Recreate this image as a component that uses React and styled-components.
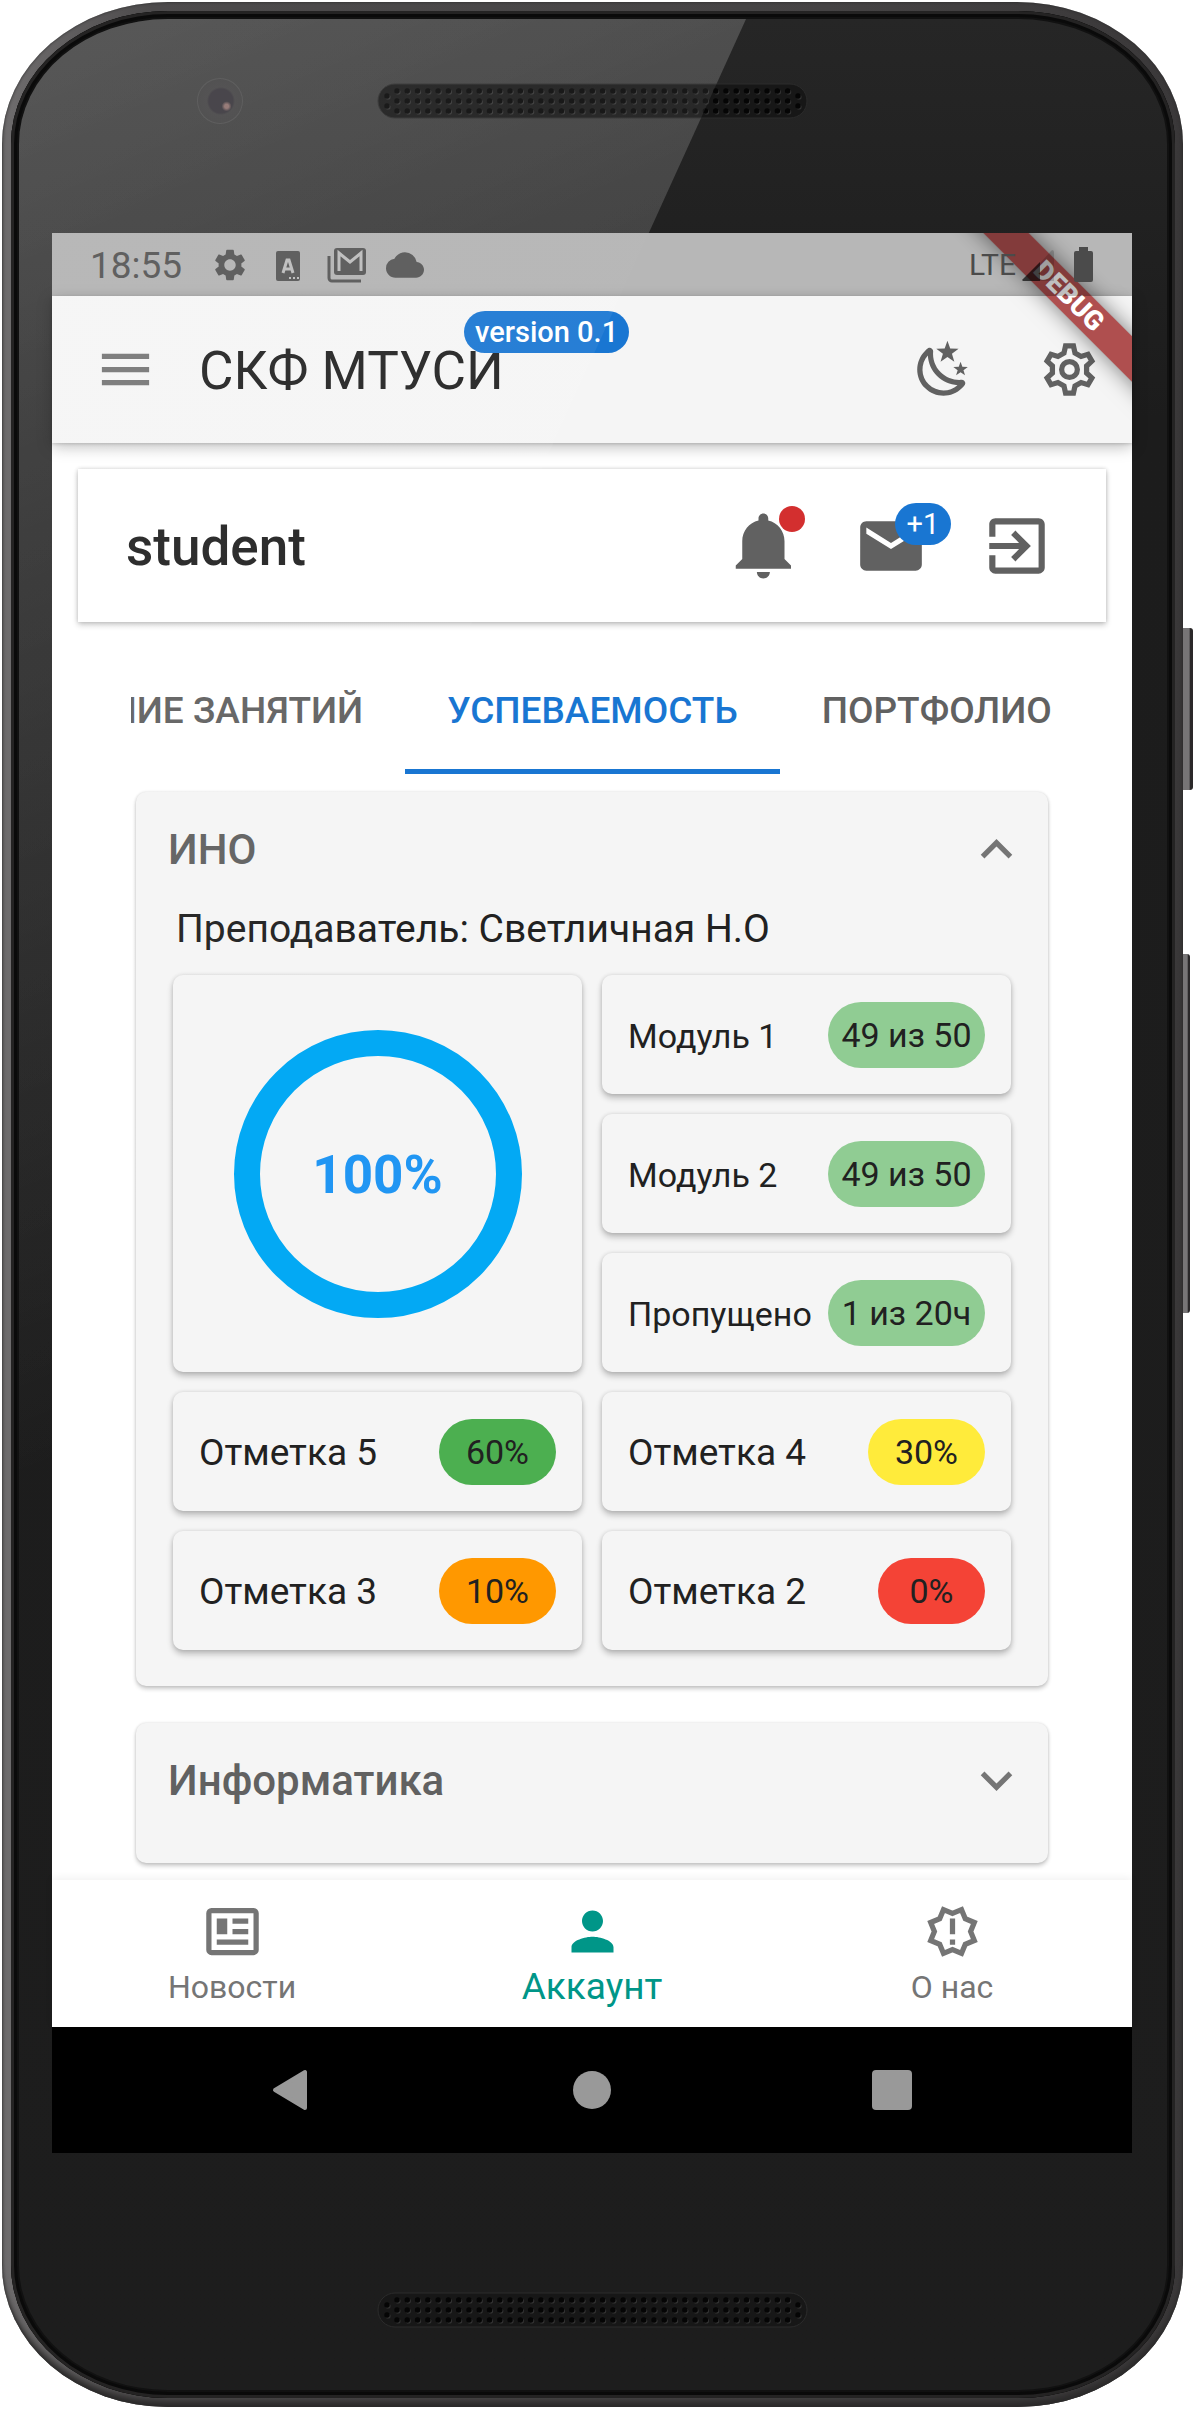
import React, { useState } from "react";
import styled, { createGlobalStyle, css } from "styled-components";
import { MdCloud, MdSettings } from "react-icons/md";

const color = {
  ink: "#212121",
  grey: "#616161",
  muted: "#757575",
  surface: "#f5f5f5",
  blue: "#1976d2",
  teal: "#009688",
};

const GlobalStyle = createGlobalStyle`
  *, *::before, *::after { box-sizing: border-box; }
  body {
    margin: 0;
    background: #fff;
    color: ${color.ink};
    font-family: Roboto, "Liberation Sans", sans-serif;
  }
  h1, h2, p, dl, dt, dd { margin: 0; font-weight: inherit; font-size: inherit; }
  button {
    border: 0;
    padding: 0;
    background: none;
    color: inherit;
    font: inherit;
    cursor: pointer;
  }
  a { color: inherit; text-decoration: none; }
  svg { display: block; }
`;

/* ---------- device ---------- */

const Page = styled.div`
  padding: 2px 11px 2px 2px;
`;

const Phone = styled.div`
  position: relative;
  padding: 9px 8px 9px 9px;
  border-radius: 166px / 142px;
  background: linear-gradient(90deg, #6f6d6e 0, #4d4b4c 150px, #454344 70%, #3a3839 100%);
  box-shadow: inset 0 -8px 6px -2px #2b2a2a, inset 0 0 3px #2a2a2a;
`;

const SideButton = styled.span`
  position: absolute;
  left: 100%;
  top: ${(p) => p.$top}px;
  width: ${(p) => p.$width}px;
  height: ${(p) => p.$height}px;
  border-radius: 0 3px 3px 0;
  background: linear-gradient(90deg, #777576 0 60%, #2a2829 75%);
`;

const Bezel = styled.div`
  padding: 8px;
  border-radius: 157px / 133px;
  background: #111;
  box-shadow: inset 0 0 0 3px #242323, inset 0 0 0 6px #0a0a0a;
`;

const Glass = styled.div`
  position: relative;
  overflow: hidden;
  padding: 0 35px 0 33px;
  border-radius: 149px / 125px;
  background: linear-gradient(180deg, #262626 0, #1c1c1c 400px, #1d1d1d 100%);
`;

const Glare = styled.span`
  position: absolute;
  inset: 0;
  pointer-events: none;
  clip-path: polygon(0 0, 727px 0, 0 1600px);
  background: linear-gradient(
    158deg,
    rgba(255, 255, 255, ${(p) => p.$strength}) 0,
    rgba(255, 255, 255, ${(p) => p.$strength * 0.4}) 30%,
    rgba(255, 255, 255, 0) 52%
  );
`;

const TopBezel = styled.div`
  position: relative;
  display: grid;
  grid-template-columns: 1fr auto 1fr;
  align-items: center;
  height: 214px;
  padding-bottom: 50px;
`;

const BottomBezel = styled.div`
  display: grid;
  place-items: center;
  height: 237px;
  padding-top: 77px;
`;

const Camera = styled.span`
  justify-self: end;
  width: 46px;
  height: 46px;
  margin-right: 134px;
  border-radius: 50%;
  border: 1px solid rgba(255, 255, 255, 0.08);
  background: radial-gradient(circle at 65% 62%, #8d6f6c 0 2px, transparent 5px),
    radial-gradient(circle at 52% 50%, #37343a 0 12px, #434243 14px, #3f3f3f 100%);
`;

const Screen = styled.div`
  position: relative;
  background: #fff;
`;

/* ---------- status bar ---------- */

const StatusBar = styled.div`
  position: relative;
  z-index: 3;
  display: flex;
  align-items: center;
  gap: 19px;
  height: 63px;
  padding: 0 39px 0 38px;
  background: rgba(0, 0, 0, 0.25);
  color: #606060;
`;

const StatusBacking = styled.div`
  background: ${color.surface};
`;

const Clock = styled.time`
  margin-right: 10px;
  padding-top: 3px;
  font-size: 37px;
  line-height: 48px;
`;

const Network = styled.div`
  display: flex;
  align-items: center;
  gap: 20px;
  margin-left: auto;
  color: #4b4b4b;
`;

const Carrier = styled.span`
  display: flex;
  align-items: center;
  gap: 6px;
  font-size: 30px;
  line-height: 40px;
`;

const BannerClip = styled.div`
  position: absolute;
  inset: 0;
  z-index: 2;
  overflow: hidden;
  pointer-events: none;
`;

const Banner = styled.div`
  position: absolute;
  top: 47px;
  right: -87px;
  width: 300px;
  height: 32px;
  transform: rotate(45deg);
  background: rgba(150, 20, 20, 0.74);
  box-shadow: 0 0 22px rgba(0, 0, 0, 0.5);
  color: #fff;
  font-size: 27px;
  font-weight: 900;
  line-height: 32px;
  text-align: center;
`;

/* ---------- app bar ---------- */

const AppBar = styled.header`
  position: relative;
  display: flex;
  align-items: center;
  height: 147px;
  background: ${color.surface};
  box-shadow: 0 4px 14px rgba(0, 0, 0, 0.26), 0 1px 3px rgba(0, 0, 0, 0.16);
`;

const MenuButton = styled.button`
  display: grid;
  place-items: center;
  width: 147px;
  height: 126px;
  color: ${color.muted};
`;

const Title = styled.h1`
  position: relative;
  margin-right: auto;
  padding-top: 3px;
  font-size: 53px;
  line-height: 60px;
`;

const VersionBadge = styled.span`
  position: absolute;
  left: 265px;
  bottom: 48px;
  padding: 0 11px;
  border-radius: 21px;
  background: ${color.blue};
  color: #fff;
  font-size: 29px;
  font-weight: 500;
  line-height: 42px;
  white-space: nowrap;
`;

const IconButton = styled.button`
  display: grid;
  place-items: center;
  width: 126px;
  height: 126px;
  color: ${color.grey};
`;

/* ---------- student card ---------- */

const Content = styled.main`
  padding: 26px 26px 17px;
`;

const StudentCard = styled.section`
  display: flex;
  align-items: center;
  height: 153px;
  padding: 0 26px 0 48px;
  background: #fff;
  box-shadow: 0 3px 6px rgba(0, 0, 0, 0.2), 0 0 4px rgba(0, 0, 0, 0.18);
`;

const StudentName = styled.h2`
  margin-right: auto;
  padding-top: 3px;
  font-size: 53px;
  font-weight: 500;
  line-height: 60px;
`;

const Badged = styled.span`
  position: relative;
  display: block;
`;

const AlertDot = styled.span`
  position: absolute;
  top: -1px;
  right: -1px;
  width: 26px;
  height: 26px;
  border-radius: 50%;
  background: #d32f2f;
`;

const CountBadge = styled.span`
  position: absolute;
  top: -6px;
  left: 41px;
  width: 56px;
  border-radius: 22px;
  background: ${color.blue};
  color: #fff;
  font-size: 29px;
  line-height: 42px;
  text-align: center;
`;

/* ---------- tabs ---------- */

const Tabs = styled.div`
  display: grid;
  grid-template-columns: minmax(0, 1fr) auto minmax(0, 1fr);
  overflow: hidden;
  margin: 31px 52px 0 53px;
`;

const TabSlot = styled.div`
  display: flex;
  justify-content: ${(p) => p.$align};
`;

const Tab = styled.button`
  flex: none;
  height: 121px;
  padding: 0 42px 2px;
  border-bottom: 5px solid transparent;
  color: ${color.grey};
  font-size: 37px;
  font-weight: 500;
  white-space: nowrap;
  ${(p) =>
    p.$active &&
    css`
      border-color: ${color.blue};
      color: ${color.blue};
    `}
`;

/* ---------- subjects ---------- */

const Subjects = styled.div`
  display: grid;
  gap: 37px;
  padding: 18px 58px 0;
`;

const SubjectCard = styled.article`
  border-radius: 10px;
  background: ${color.surface};
  box-shadow: 0 3px 4px rgba(0, 0, 0, 0.2), 0 0 3px rgba(0, 0, 0, 0.14);
`;

const SubjectHeader = styled.button`
  display: flex;
  align-items: center;
  justify-content: space-between;
  width: 100%;
  height: 114px;
  padding: 0 20px 0 32px;
  color: ${color.grey};
  font-size: 42px;
  font-weight: 500;
`;

const SubjectFooter = styled.div`
  height: 26px;
`;

const SubjectBody = styled.div`
  padding: 0 37px 36px;
`;

const Teacher = styled.p`
  margin: 0 0 23px 3px;
  font-size: 39px;
  line-height: 46px;
`;

const Scores = styled.dl`
  display: grid;
  grid-template-columns: 1fr 1fr;
  gap: 20px;
`;

const tile = css`
  border-radius: 10px;
  background: ${color.surface};
  box-shadow: 0 4px 6px rgba(0, 0, 0, 0.24), 0 0 4px rgba(0, 0, 0, 0.12);
`;

const RingTile = styled.div`
  ${tile}
  grid-row: span 3;
  display: grid;
  place-items: center;
  > * {
    grid-area: 1 / 1;
  }
`;

const RingValue = styled.strong`
  padding-top: 3px;
  color: #2196f3;
  font-size: 53px;
  font-weight: 700;
  line-height: 60px;
`;

const ScoreTile = styled.div`
  ${tile}
  display: flex;
  align-items: center;
  justify-content: space-between;
  height: 119px;
  padding: 0 26px;
  font-size: ${(p) => (p.$large ? 37 : 34)}px;
  white-space: nowrap;
`;

const ScoreLabel = styled.dt`
  padding-top: 2px;
  line-height: 48px;
`;

const Chip = styled.dd`
  min-width: ${(p) => (p.$wide ? 157 : 107)}px;
  padding: 0 ${(p) => (p.$wide ? 12 : 27)}px;
  border-radius: 33px;
  background: ${(p) => p.$tone};
  font-size: 34px;
  line-height: 66px;
  text-align: center;
`;

/* ---------- bottom bars ---------- */

const BottomNav = styled.nav`
  position: relative;
  display: flex;
  background: #fff;
  box-shadow: 0 -2px 8px rgba(0, 0, 0, 0.06);
`;

const NavItem = styled.a`
  flex: 1;
  display: grid;
  justify-items: center;
  padding: 20px 0 16px;
  color: ${(p) => (p.$active ? color.teal : color.muted)};
  font-size: ${(p) => (p.$active ? 37 : 32)}px;
  line-height: 48px;
`;

const SystemBar = styled.div`
  display: flex;
  justify-content: center;
  gap: 174px;
  height: 126px;
  background: #000;
  color: #999;
`;

const SystemButton = styled.button`
  display: grid;
  place-items: center;
  width: 126px;
`;

/* ---------- drawings ---------- */

const Icon = ({ size = 63, children }) => (
  <svg width={size} height={size} viewBox="0 0 24 24" fill="currentColor" aria-hidden="true">
    {children}
  </svg>
);

const polar = (pairs) => pairs.map(([x, y]) => `${x.toFixed(2)},${y.toFixed(2)}`).join(" ");

const gearPoints = polar(
  [0, 1, 2, 3, 4, 5].flatMap((k) => {
    const a = (k * Math.PI) / 3;
    return [
      [-2.1, -6.3],
      [-1.5, -9],
      [1.5, -9],
      [2.1, -6.3],
    ].map(([x, y]) => [
      12 + x * Math.cos(a) - y * Math.sin(a),
      12 + x * Math.sin(a) + y * Math.cos(a),
    ]);
  })
);

const burstPoints = polar(
  Array.from({ length: 16 }, (_, i) => {
    const a = (i * Math.PI) / 8;
    const r = i % 2 ? 9 : 6.9;
    return [12 + r * Math.sin(a), 12 - r * Math.cos(a)];
  })
);

const GearOutline = () => (
  <Icon>
    <g fill="none" stroke="currentColor" strokeWidth="2">
      <polygon points={gearPoints} />
      <circle cx="12" cy="12" r="3" />
    </g>
  </Icon>
);

const MoonStars = () => (
  <Icon>
    <path d="M17.75,4.09L15.22,6.03L16.13,9.09L13.5,7.28L10.87,9.09L11.78,6.03L9.25,4.09L12.44,4L13.5,1L14.56,4L17.75,4.09M21.25,11L19.61,12.25L20.2,14.23L18.5,13.06L16.8,14.23L17.39,12.25L15.75,11L17.81,10.95L18.5,9L19.19,10.95L21.25,11M18.97,15.95C19.8,15.87 20.69,17.05 20.16,17.8C19.84,18.25 19.5,18.67 19.08,19.07C15.17,23 8.84,23 4.94,19.07C1.03,15.17 1.03,8.83 4.94,4.93C5.34,4.53 5.76,4.17 6.21,3.85C6.96,3.32 8.14,4.21 8.06,5.04C7.79,7.9 8.75,10.87 10.95,13.06C13.14,15.26 16.1,16.22 18.97,15.95M17.33,17.97C14.5,17.81 11.7,16.64 9.53,14.5C7.36,12.31 6.2,9.5 6.04,6.68C3.23,9.82 3.34,14.64 6.35,17.66C9.37,20.67 14.19,20.78 17.33,17.97Z" />
  </Icon>
);

const Bell = () => (
  <Icon size={78}>
    <path d="M11.5 22c1.1 0 2-.9 2-2h-4c0 1.1.9 2 2 2zm6.5-6v-5.5c0-3.07-2.13-5.64-5-6.32V3.5c0-.83-.67-1.5-1.5-1.5S10 2.67 10 3.5v.68c-2.87.68-5 3.25-5 6.32V16l-2 2v1h17v-1l-2-2z" />
  </Icon>
);

const Mail = () => (
  <Icon size={74}>
    <path d="M20 4H4c-1.1 0-1.99.9-1.99 2L2 18c0 1.1.9 2 2 2h16c1.1 0 2-.9 2-2V6c0-1.1-.9-2-2-2zm0 4l-8 5-8-5V6l8 5 8-5v2z" />
  </Icon>
);

const Exit = () => (
  <Icon size={74}>
    <path d="M10.09 15.59L11.5 17l5-5-5-5-1.41 1.41L12.67 11H3v2h9.67l-2.58 2.59zM19 3H5c-1.11 0-2 .9-2 2v4h2V5h14v14H5v-4H3v4c0 1.1.89 2 2 2h14c1.1 0 2-.9 2-2V5c0-1.1-.9-2-2-2z" />
  </Icon>
);

const Chevron = ({ up }) => (
  <Icon>
    <path
      d={
        up
          ? "M12 8l-6 6 1.41 1.41L12 10.83l4.59 4.58L18 14z"
          : "M16.59 8.59L12 13.17 7.41 8.59 6 10l6 6 6-6z"
      }
      fill={color.muted}
    />
  </Icon>
);

const News = () => (
  <Icon>
    <rect x="3" y="4" width="18" height="16" rx="1" fill="none" stroke="currentColor" strokeWidth="2" />
    <path d="M6 7h4v6H6zM12 7h6v2h-6zM12 11h6v2h-6zM6 15h12v2H6z" />
  </Icon>
);

const Person = () => (
  <Icon>
    <path d="M12 12c2.21 0 4-1.79 4-4s-1.79-4-4-4-4 1.79-4 4 1.79 4 4 4zm0 2c-2.67 0-8 1.34-8 4v2h16v-2c0-2.66-5.33-4-8-4z" />
  </Icon>
);

const Burst = () => (
  <Icon>
    <polygon points={burstPoints} fill="none" stroke="currentColor" strokeWidth="2" />
    <path d="M11 7h2v6h-2zM11 15h2v2h-2z" />
  </Icon>
);

const KeyboardGlyph = () => (
  <svg width="40" height="40" viewBox="0 0 40 40" aria-hidden="true">
    <rect x="8" y="6" width="24" height="30" rx="2" fill="currentColor" />
    <path d="M15 28l4-13h2l4 13M16.500 24h7" fill="none" stroke="#c0c0c0" strokeWidth="3" />
    <path d="M21 32h2v2h-2zM25 32h2v2h-2zM29 32h2v2h-2z" fill="#c0c0c0" />
  </svg>
);

const MailStack = () => (
  <svg width="40" height="40" viewBox="0 0 40 40" fill="none" stroke="currentColor" aria-hidden="true">
    <path d="M2 11v22a3 3 0 0 0 3 3h29" strokeWidth="3" />
    <rect x="7" y="3" width="32" height="27" rx="3" fill="currentColor" stroke="none" />
    <path d="M12 26V8l11 9 11-9v18" stroke="#c0c0c0" strokeWidth="3" />
  </svg>
);

const Signal = () => (
  <svg width="32" height="32" viewBox="0 0 32 32" aria-hidden="true">
    <path d="M30 1a2 2 0 0 1 2 2v29H18V14z" fill="#000" fillOpacity="0.16" />
    <path d="M0 31l18-18v19H1z" fill="#000" fillOpacity="0.66" />
  </svg>
);

const Battery = () => (
  <svg width="19" height="35" viewBox="0 0 19 35" fill="currentColor" aria-hidden="true">
    <path d="M5 0h9v4h3a2 2 0 0 1 2 2v27a2 2 0 0 1-2 2H2a2 2 0 0 1-2-2V6a2 2 0 0 1 2-2h3z" />
  </svg>
);

const Grille = () => {
  const dots = [];
  for (let c = 0; c < 39; c += 1) {
    for (let r = 0; r < 3; r += 1) dots.push([20 + c * 10.28, 8 + r * 10]);
  }
  dots.push([10, 13], [10, 23], [421, 13], [421, 23]);
  return (
    <svg width="431" height="36" viewBox="0 0 431 36" aria-hidden="true">
      <rect x="1" y="1" width="429" height="34" rx="17" fill="#171717" stroke="#2c2c2c" />
      {dots.map(([x, y]) => (
        <g key={`${x}-${y}`}>
          <circle cx={x + 1} cy={y + 1} r="2.6" fill="#343434" />
          <circle cx={x} cy={y} r="2.7" fill="#050505" />
        </g>
      ))}
    </svg>
  );
};

const Ring = ({ value }) => {
  const length = 2 * Math.PI * 131;
  return (
    <svg width="288" height="288" viewBox="0 0 288 288" aria-hidden="true">
      <circle
        cx="144"
        cy="144"
        r="131"
        fill="none"
        stroke="#03a9f4"
        strokeWidth="26"
        strokeDasharray={`${(length * value) / 100} ${length}`}
        transform="rotate(-90 144 144)"
      />
    </svg>
  );
};

/* ---------- data ---------- */

const modules = [
  { label: "Модуль 1", value: "49 из 50" },
  { label: "Модуль 2", value: "49 из 50" },
  { label: "Пропущено", value: "1 из 20ч" },
];

const marks = [
  { label: "Отметка 5", value: "60%", tone: "#4caf50" },
  { label: "Отметка 4", value: "30%", tone: "#ffeb3b" },
  { label: "Отметка 3", value: "10%", tone: "#ff9800" },
  { label: "Отметка 2", value: "0%", tone: "#f44336" },
];

const tabs = [
  { label: "РАСПИСАНИЕ ЗАНЯТИЙ", align: "flex-end" },
  { label: "УСПЕВАЕМОСТЬ", align: "center" },
  { label: "ПОРТФОЛИО", align: "flex-start" },
];

const sections = [
  { label: "Новости", icon: <News /> },
  { label: "Аккаунт", icon: <Person /> },
  { label: "О нас", icon: <Burst /> },
];

const Subject = ({ name, teacher, defaultOpen }) => {
  const [open, setOpen] = useState(Boolean(defaultOpen));
  return (
    <SubjectCard>
      <SubjectHeader aria-expanded={open} onClick={() => setOpen(!open)}>
        {name}
        <Chevron up={open} />
      </SubjectHeader>
      {open ? (
        <SubjectBody>
          <Teacher>{teacher}</Teacher>
          <Scores>
            <RingTile>
              <Ring value={100} />
              <RingValue>100%</RingValue>
            </RingTile>
            {modules.map((m) => (
              <ScoreTile key={m.label}>
                <ScoreLabel>{m.label}</ScoreLabel>
                <Chip $wide $tone="#90cc93">{m.value}</Chip>
              </ScoreTile>
            ))}
            {marks.map((m) => (
              <ScoreTile key={m.label} $large>
                <ScoreLabel>{m.label}</ScoreLabel>
                <Chip $tone={m.tone}>{m.value}</Chip>
              </ScoreTile>
            ))}
          </Scores>
        </SubjectBody>
      ) : (
        <SubjectFooter />
      )}
    </SubjectCard>
  );
};

export default function App() {
  return (
    <Page>
      <GlobalStyle />
      <Phone>
        <SideButton $top={626} $height={162} $width={10} />
        <SideButton $top={952} $height={359} $width={7} />
        <Bezel>
          <Glass>
            <Glare $strength={0.15} />
            <TopBezel>
              <Camera />
              <Grille />
            </TopBezel>
            <Screen>
              <StatusBacking>
                <StatusBar>
                  <Clock>18:55</Clock>
                  <MdSettings size={38} />
                  <KeyboardGlyph />
                  <MailStack />
                  <MdCloud size={38} />
                  <Network>
                    <Carrier>
                      LTE
                      <Signal />
                    </Carrier>
                    <Battery />
                  </Network>
                </StatusBar>
              </StatusBacking>
              <AppBar>
                <MenuButton aria-label="Меню">
                  <Icon>
                    <path d="M3 6h18v2H3zM3 11h18v2H3zM3 16h18v2H3z" />
                  </Icon>
                </MenuButton>
                <Title>
                  СКФ МТУСИ
                  <VersionBadge>version 0.1</VersionBadge>
                </Title>
                <IconButton aria-label="Тёмная тема">
                  <MoonStars />
                </IconButton>
                <IconButton aria-label="Настройки">
                  <GearOutline />
                </IconButton>
              </AppBar>
              <BannerClip>
                <Banner>DEBUG</Banner>
              </BannerClip>
              <Content>
                <StudentCard>
                  <StudentName>student</StudentName>
                  <IconButton aria-label="Уведомления">
                    <Badged>
                      <Bell />
                      <AlertDot />
                    </Badged>
                  </IconButton>
                  <IconButton aria-label="Сообщения">
                    <Badged>
                      <Mail />
                      <CountBadge>+1</CountBadge>
                    </Badged>
                  </IconButton>
                  <IconButton aria-label="Выйти">
                    <Exit />
                  </IconButton>
                </StudentCard>
                <Tabs role="tablist">
                  {tabs.map((t, i) => (
                    <TabSlot key={t.label} $align={t.align} role="presentation">
                      <Tab role="tab" aria-selected={i === 1} $active={i === 1}>
                        {t.label}
                      </Tab>
                    </TabSlot>
                  ))}
                </Tabs>
                <Subjects>
                  <Subject name="ИНО" teacher="Преподаватель: Светличная Н.О" defaultOpen />
                  <Subject name="Информатика" />
                </Subjects>
              </Content>
              <BottomNav>
                {sections.map((s, i) => (
                  <NavItem key={s.label} href="#" $active={i === 1}>
                    {s.icon}
                    {s.label}
                  </NavItem>
                ))}
              </BottomNav>
              <SystemBar>
                <SystemButton aria-label="Назад">
                  <svg width="44" height="44" viewBox="0 0 44 44" aria-hidden="true">
                    <path
                      d="M5 22L35 4v36z"
                      fill="currentColor"
                      stroke="currentColor"
                      strokeWidth="4"
                      strokeLinejoin="round"
                    />
                  </svg>
                </SystemButton>
                <SystemButton aria-label="Домой">
                  <svg width="38" height="38" viewBox="0 0 38 38" aria-hidden="true">
                    <circle cx="19" cy="19" r="19" fill="currentColor" />
                  </svg>
                </SystemButton>
                <SystemButton aria-label="Недавние">
                  <svg width="40" height="40" viewBox="0 0 40 40" aria-hidden="true">
                    <rect width="40" height="40" rx="4" fill="currentColor" />
                  </svg>
                </SystemButton>
              </SystemBar>
            </Screen>
            <BottomBezel>
              <Grille />
            </BottomBezel>
            <Glare $strength={0.1} />
          </Glass>
        </Bezel>
      </Phone>
    </Page>
  );
}
